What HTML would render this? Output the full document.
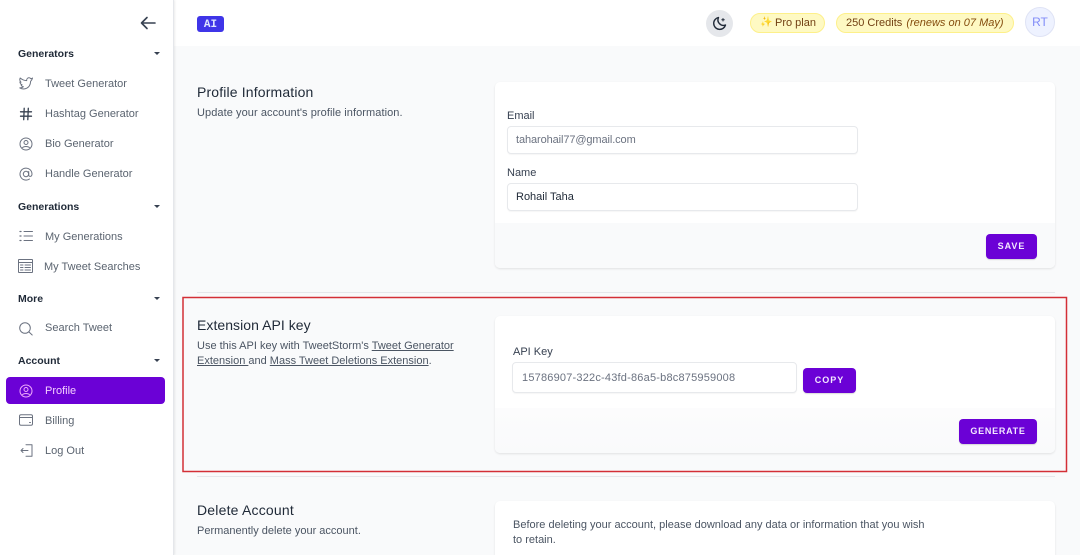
<!DOCTYPE html>
<html><head><meta charset="utf-8"><style>
*{box-sizing:border-box}
html,body{margin:0;padding:0;overflow:hidden;height:555px}
body{width:1080px;height:555px;position:relative;background:#f9fafb;font-family:"Liberation Sans","Noto Sans CJK SC",sans-serif;color:#4b5563}
.a{position:absolute}
.t{position:absolute;white-space:nowrap;line-height:14px;font-size:11px;letter-spacing:0}
.h{font-weight:700;color:#1f2937;font-size:10.5px;letter-spacing:0}
.n{color:#5b6470}
.ti{font-size:14px;color:#1f2937;letter-spacing:.15px;line-height:18px}
.card{position:absolute;background:#fff;border-radius:5px;box-shadow:0 1px 2px rgba(0,0,0,.1);overflow:hidden}
.foot{position:absolute;left:0;right:0;bottom:0;background:#f9fafb}
.inp{position:absolute;background:#fff;border:1px solid #e7e9ec;border-radius:4px;box-shadow:0 1px 1px rgba(0,0,0,.04)}
.btn{position:absolute;background:#6b01d6;border-radius:4px;color:#f3e8ff;font-weight:700;font-size:9px;letter-spacing:1px;text-align:center;box-shadow:0 1px 1px rgba(0,0,0,.15)}
.tri{position:absolute;width:0;height:0;border-left:3.5px solid transparent;border-right:3.5px solid transparent;border-top:3.5px solid #374151}
svg{position:absolute;overflow:visible;fill:none;stroke:#6b7280;stroke-width:1;stroke-linecap:round;stroke-linejoin:round}
u{text-underline-offset:1px}
</style></head><body>
<!-- main header -->
<div class="a" style="left:174px;top:0;width:906px;height:46px;background:#fff"></div>
<!-- sidebar -->
<div class="a" style="left:0;top:0;width:174px;height:555px;background:#fff;border-right:1px solid #e5e7eb;box-shadow:1px 0 2px rgba(0,0,0,.08)"></div>
<svg style="left:140px;top:16px" width="16" height="14" viewBox="0 0 16 14"><path d="M15 7H1.500M7 1.500 1.500 7 7 12.500" stroke-width="1.600" style="stroke:#374151"/></svg>

<div class="t h" style="left:18px;top:47px">Generators</div><div class="tri" style="left:154px;top:52px"></div>
<svg style="left:19px;top:77px" width="14" height="13" viewBox="0 0 14 13"><path d="M13.500 1.200c-.6.3-1.100.4-1.700.5-.6-.7-1.300-1-2.100-.9-1.300.2-2.200 1.400-2 2.800C5 3.600 3 2.600 1.200 1c-.8 1.600-.4 3 .8 4.200L.9 5c.1 1.400 1 2.300 2.200 2.800L2.100 7.900c.3 1 1.200 1.700 2.300 1.800-1 .8-2.200 1.200-3.600 1.200 4.500 2.500 10.500.5 10.800-6.500.7-.6 1.400-1.400 1.900-3.400Z"/></svg>
<div class="t n" style="left:45px;top:77px">Tweet Generator</div>
<svg style="left:20px;top:108px" width="12" height="12" viewBox="0 0 12 12"><path d="M.5 3.800H11.500M.5 8.200H11.500M4.200 .3 3.700 11.700M8.300 .3 7.800 11.700" style="stroke:#374151" stroke-width="1.300"/></svg>
<div class="t n" style="left:45px;top:107px">Hashtag Generator</div>
<svg style="left:19px;top:137px" width="14" height="14" viewBox="0 0 14 14"><circle cx="7" cy="7" r="6"/><circle cx="7" cy="5.500" r="2"/><path d="M3.500 10.500c1.800-1.400 5.200-1.400 7 0"/></svg>
<div class="t n" style="left:45px;top:137px">Bio Generator</div>
<svg style="left:19px;top:167px" width="14" height="14" viewBox="0 0 14 14"><circle cx="7" cy="7" r="2.700"/><path d="M9.700 4.500V8c0 2 3.300 2 3.300-1a6 6 0 1 0-2.500 5"/></svg>
<div class="t n" style="left:45px;top:167px">Handle Generator</div>

<div class="t h" style="left:18px;top:200px">Generations</div><div class="tri" style="left:154px;top:205px"></div>
<svg style="left:19px;top:230px" width="14" height="12" viewBox="0 0 14 12"><path d="M5 1.500H13.500M5 6H13.500M5 10.500H13.500"/><path d="M1 1.500h1M1 6h1M1 10.500h1" stroke-width="1.300"/></svg>
<div class="t n" style="left:45px;top:230px">My Generations</div>
<svg style="left:18px;top:259px" width="15" height="14" viewBox="0 0 15 14"><rect x=".5" y=".5" width="14" height="13" rx=".5"/><path d="M.5 3.500H14.500M2.500 6H5M2.500 8.500H5M2.500 11H5M7 6H12.500M7 8.500H12.500M7 11H12.500"/></svg>
<div class="t n" style="left:44px;top:260px">My Tweet Searches</div>

<div class="t h" style="left:18px;top:292px">More</div><div class="tri" style="left:154px;top:297px"></div>
<svg style="left:19px;top:322px" width="14" height="14" viewBox="0 0 14 14"><circle cx="6" cy="6" r="5.300"/><path d="M10 10l3.200 3"/></svg>
<div class="t n" style="left:45px;top:321px">Search Tweet</div>

<div class="t h" style="left:18px;top:354px">Account</div><div class="tri" style="left:154px;top:359px"></div>
<div class="a" style="left:6px;top:377px;width:159px;height:27px;background:#6b01d6;border-radius:4px"></div>
<svg style="left:19px;top:384px;stroke:#f0abfc" width="14" height="14" viewBox="0 0 14 14"><circle cx="7" cy="7" r="6"/><circle cx="7" cy="5.500" r="2"/><path d="M3.500 10.500c1.800-1.400 5.200-1.400 7 0"/></svg>
<div class="t" style="left:45px;top:384px;color:#f5d0fe">Profile</div>
<svg style="left:19px;top:414px" width="14" height="12" viewBox="0 0 14 12"><rect x=".5" y=".8" width="13" height="10.400" rx="1.500"/><path d="M.5 3.500H13.500M10.500 8.500h1"/></svg>
<div class="t n" style="left:45px;top:414px">Billing</div>
<svg style="left:20px;top:444px" width="13" height="13" viewBox="0 0 13 13"><path d="M6 .8H12V12.200H6M1 6.500H8M1 6.500 3 4.500M1 6.500 3 8.500"/></svg>
<div class="t n" style="left:45px;top:444px">Log Out</div>

<!-- top bar -->
<div class="a" style="left:197px;top:16px;width:27px;height:16px;background:#3f35e8;border-radius:3px;color:#e0e7ff;font:700 11px/18px 'Liberation Mono',monospace;text-align:center">AI</div>
<div class="a" style="left:706px;top:10px;width:27px;height:27px;border-radius:50%;background:#e5e7eb"></div>
<svg style="left:712px;top:16px;stroke:#1f2937;stroke-width:1.400" width="15" height="15" viewBox="0 0 15 15"><path d="M6.500 1.500a6 6 0 1 0 7 7.500A5.500 5.500 0 0 1 6.500 1.500Z"/><path d="M11 2.500v2.500M9.800 3.700h2.500" stroke-width="1"/></svg>
<div class="a" style="left:750px;top:13px;width:75px;height:20px;border-radius:10px;background:#fef9c3;border:1px solid #fdf08a"></div>
<div class="t" style="left:760px;top:16px;color:#facc15;font-size:10px;letter-spacing:0">✨</div>
<div class="t" style="left:775px;top:16px;color:#713f12">Pro plan</div>
<div class="a" style="left:836px;top:13px;width:178px;height:20px;border-radius:10px;background:#fef9c3;border:1px solid #fdf08a"></div>
<div class="t" style="left:846px;top:16px;color:#713f12">250 Credits <i style="color:#854d0e;margin-left:1px">(renews on 07 May)</i></div>
<div class="a" style="left:1025px;top:7px;width:30px;height:30px;border-radius:50%;background:#eef2ff;border:1px solid #dfe3f5;color:#818cf8;font-size:12px;line-height:29px;text-align:center">RT</div>

<!-- profile info -->
<div class="t ti" style="left:197px;top:83px">Profile Information</div>
<div class="t" style="left:197px;top:106px;letter-spacing:.07px">Update your account's profile information.</div>
<div class="card" style="left:495px;top:82px;width:560px;height:186px"><div class="foot" style="height:45px"></div></div>
<div class="t" style="left:507px;top:109px;color:#374151">Email</div>
<div class="inp" style="left:507px;top:126px;width:351px;height:28px"></div>
<div class="t" style="left:516px;top:133px;color:#6b7280;letter-spacing:-.1px">taharohail77@gmail.com</div>
<div class="t" style="left:507px;top:166px;color:#374151">Name</div>
<div class="inp" style="left:507px;top:183px;width:351px;height:28px"></div>
<div class="t" style="left:516px;top:190px;color:#1f2937">Rohail Taha</div>
<div class="btn" style="left:986px;top:234px;width:51px;height:25px;line-height:25px">SAVE</div>
<div class="a" style="left:197px;top:292px;width:858px;height:1px;background:#e5e7eb"></div>

<!-- api key -->
<div class="t ti" style="left:197px;top:316px;letter-spacing:.05px">Extension API key</div>
<div class="t" style="left:197px;top:339px">Use this API key with TweetStorm's <u>Tweet Generator</u></div>
<div class="t" style="left:197px;top:354px"><u>Extension </u> and <u>Mass Tweet Deletions Extension</u>.</div>
<div class="card" style="left:495px;top:316px;width:560px;height:137px"><div class="foot" style="height:45px;background:linear-gradient(#fcfcfd,#f9fafb)"></div></div>
<div class="t" style="left:513px;top:345px;color:#374151">API Key</div>
<div class="inp" style="left:512px;top:362px;width:285px;height:31px"></div>
<div class="t" style="left:522px;top:371px;color:#6b7280;letter-spacing:.2px">15786907-322c-43fd-86a5-b8c875959008</div>
<div class="btn" style="left:803px;top:368px;width:53px;height:25px;line-height:25px">COPY</div>
<div class="btn" style="left:959px;top:419px;width:78px;height:25px;line-height:25px;letter-spacing:.75px">GENERATE</div>
<div class="a" style="left:197px;top:476px;width:858px;height:1px;background:#e5e7eb"></div>
<!-- red box -->
<svg style="left:0;top:0;stroke-linejoin:miter" width="1080" height="555"><rect x="183" y="297.500" width="883.500" height="174" style="stroke:#d32f36;stroke-width:1.500"/></svg>

<!-- delete -->
<div class="t ti" style="left:197px;top:501px;letter-spacing:.2px">Delete Account</div>
<div class="t" style="left:197px;top:524px">Permanently delete your account.</div>
<div class="card" style="left:495px;top:501px;width:560px;height:54px;border-radius:5px 5px 0 0"></div>
<div class="t" style="left:513px;top:518px">Before deleting your account, please download any data or information that you wish</div>
<div class="t" style="left:513px;top:533px">to retain.</div>
</body></html>
